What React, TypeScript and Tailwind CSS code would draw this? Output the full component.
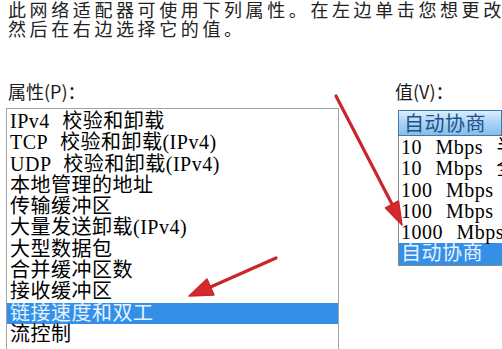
const props = [
  "IPv4 校验和卸载",
  "TCP 校验和卸载(IPv4)",
  "UDP 校验和卸载(IPv4)",
  "本地管理的地址",
  "传输缓冲区",
  "大量发送卸载(IPv4)",
  "大型数据包",
  "合并缓冲区数",
  "接收缓冲区",
  "链接速度和双工",
  "流控制",
];

const values = [
  "10 Mbps 半双工",
  "10 Mbps 全双工",
  "100 Mbps 半双工",
  "100 Mbps 全双工",
  "1000 Mbps 全双工",
  "自动协商",
];

const listFont = { fontFamily: '"Liberation Serif", "Noto Sans CJK SC", serif' };

function Arrows() {
  return (
    <svg className="absolute inset-0 pointer-events-none" width="502" height="349" viewBox="0 0 502 349">
      <g stroke="#c9252b" strokeWidth="3.2" strokeLinecap="round" fill="#d42a2e">
        <line x1="336" y1="96" x2="394" y2="208" />
        <polygon points="402,225 398.5,201 385.5,208" strokeWidth="1.5" strokeLinejoin="round" />
        <line x1="276" y1="258" x2="206" y2="289" />
        <polygon points="189,296 214,295 207,279" strokeWidth="1.5" strokeLinejoin="round" />
      </g>
    </svg>
  );
}

export default function App() {
  return (
    <div
      className="relative w-[502px] h-[349px] overflow-hidden bg-white text-[#1a1a1a] flex flex-col"
      style={{ fontFamily: '"Noto Sans CJK SC", "Noto Sans", sans-serif' }}
    >
      <div className="pl-[8px] text-[18px] leading-[19px] tracking-[3.6px] whitespace-nowrap text-[#222]">
        <div>此网络适配器可使用下列属性。在左边单击您想更改</div>
        <div>然后在右边选择它的值。</div>
      </div>

      <div className="mt-[42px] flex flex-1 min-h-0">
        {/* left: properties */}
        <div className="ml-[6px] w-[333px] flex flex-col">
          <div className="h-[28px] pl-[2px] text-[18px] leading-[22px]">属性(P)：</div>
          <div className="flex-1 border-t border-l border-r border-[#a3a3a3] pt-[2px]" style={listFont}>
            {props.map((p, i) => (
              <div
                key={i}
                className={`h-[21.3px] pl-[3px] text-[20px] leading-[21px] tracking-[0.5px] [word-spacing:7px] whitespace-pre ${
                  i === 9 ? "bg-[#3390e6] text-[#e8f2ff]" : "text-black"
                }`}
              >
                {p}
              </div>
            ))}
          </div>
        </div>

        {/* right: value */}
        <div className="ml-[56px] flex-1 flex flex-col min-w-0">
          <div className="h-[30px] text-[18px] leading-[22px]">值(V)：</div>
          <div className="ml-[3px] h-[26px] border border-[#3f7cae] bg-gradient-to-b from-[#d9eeff] via-[#a9d3f5] to-[#86bde9] pl-[5px] text-[20px] leading-[23px] tracking-[0.5px] text-[#23508a] whitespace-nowrap">
            自动协商
          </div>
          <div className="ml-[3px] border-l border-b border-[#8a8a8a] pt-[1px]" style={listFont}>
            {values.map((v, i) => (
              <div
                key={i}
                className={`h-[21.3px] pl-[2px] text-[20px] leading-[21px] tracking-[0.5px] [word-spacing:8px] whitespace-pre ${
                  i === 5 ? "bg-[#3390e6] text-[#e8f2ff]" : "text-black"
                }`}
              >
                {v}
              </div>
            ))}
          </div>
        </div>
      </div>

      <Arrows />
    </div>
  );
}
